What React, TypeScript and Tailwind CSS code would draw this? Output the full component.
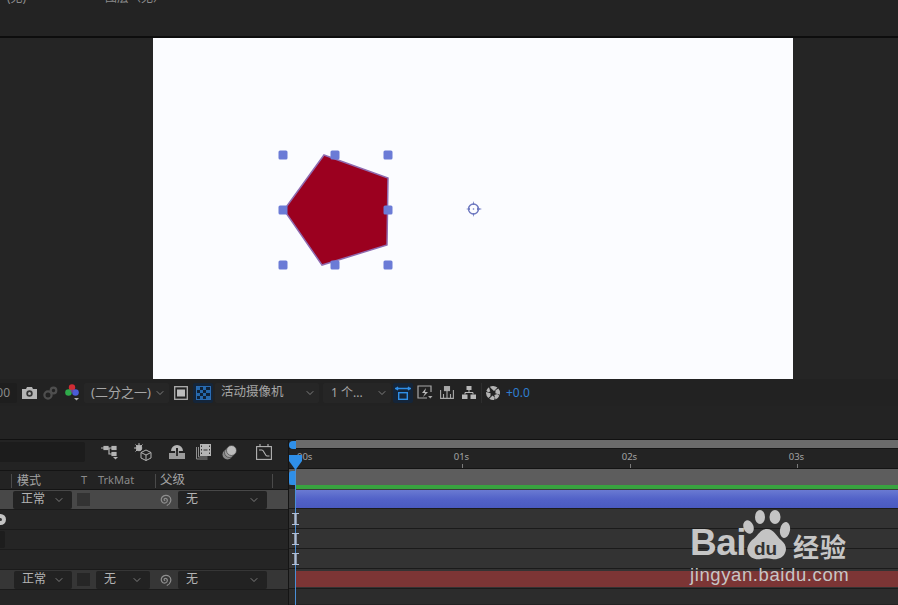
import { ChevronDown } from "lucide-react";

const font = "font-['Noto_Sans','Noto_Sans_CJK_SC',sans-serif]";

const handles = [
  [130, 117],
  [182, 117],
  [235, 117],
  [130, 172],
  [235, 172],
  [130, 227],
  [182, 227],
  [235, 227],
];

const Select = ({ label, className }: { label: string; className: string }) => (
  <div className={`flex h-[18px] items-center justify-between rounded-[2px] bg-[#222222] pb-[2px] pl-[8px] pr-[7px] text-[12px] text-[#b4b4b4] ${className}`}>
    <span>{label}</span>
    <ChevronDown size={12} strokeWidth={1.5} className="mt-[2px] text-[#9a9a9a]" />
  </div>
);

const Spiral = () => (
  <svg width="14" height="14" viewBox="0 0 14 14" fill="none" stroke="#8f8f8f" strokeWidth="1.2" strokeLinecap="round">
    <path d="M6.800 7.400c-.9-.2-1-1.500 0-1.900 1.300-.5 2.700.6 2.500 2.200-.2 1.900-2.500 2.900-4.300 2C3 8.700 2.700 5.800 4.200 4c1.700-2 5-2.300 7-.6 1.500 1.300 1.900 3.400 1.300 5.200-.5 1.600-1.700 3-3.300 3.700" />
  </svg>
);

const Swatch = ({ className }: { className: string }) => <div className={`h-[13px] w-[13px] ${className}`} />;

const ToolIcon = ({ children, active }: { children: React.ReactNode; active?: boolean }) => (
  <div className={`flex h-[20px] w-[20px] shrink-0 items-center justify-center rounded-[2px] ${active ? "bg-[#14253a]" : ""}`}>{children}</div>
);

const Toolbar = () => (
  <div className={`flex h-[27px] items-center bg-[#222222] text-[12px] text-[#a6a6a6] ${font}`}>
    <div className="flex h-[20px] w-[17px] items-center justify-end rounded-r-[2px] bg-[#1e1e1e] pr-[7px] text-[#8a8a8a]">
      <span className="whitespace-nowrap">00</span>
    </div>
    <div className="ml-[2px]"><ToolIcon>
      <svg width="15" height="12" viewBox="0 0 15 12"><path d="M0 2h4l1-2h5l1 2h4v10H0z" fill="#b4b4b4" /><circle cx="7.500" cy="6.500" r="3.200" fill="#333333" /><circle cx="7.500" cy="6.500" r="1.500" fill="#b4b4b4" /></svg>
    </ToolIcon></div>
    <div className="ml-[1px]"><ToolIcon>
      <svg width="15" height="14" viewBox="0 0 15 14" fill="none" stroke="#4e4e4e" strokeWidth="2.200"><circle cx="5" cy="9" r="3.600" /><circle cx="10.500" cy="4.500" r="2.800" /></svg>
    </ToolIcon></div>
    <div className="ml-[2px]"><ToolIcon>
      <svg width="15" height="17" viewBox="0 0 15 17"><circle cx="7" cy="3.500" r="3.200" fill="#d02c34" /><circle cx="3.500" cy="8.500" r="3.300" fill="#2faa4a" /><circle cx="10.500" cy="8.500" r="3.300" fill="#4a5cd8" /><circle cx="7" cy="7" r="1.500" fill="#6a4a90" /><path d="M9 14h5l-2.500 2.500z" fill="#b0b0b0" /></svg>
    </ToolIcon></div>
    <div className="ml-[2px] flex h-[20px] w-[85px] items-center justify-between rounded-[2px] bg-[#262626] pl-[7px] pr-[3px] text-[13px]">
      <span className="whitespace-nowrap">(二分之一)</span>
      <ChevronDown size={12} strokeWidth={1.5} className="text-[#9a9a9a]" />
    </div>
    <div className="ml-[2px]"><ToolIcon>
      <svg width="14" height="14" viewBox="0 0 14 14"><rect x=".7" y=".7" width="12.600" height="12.600" fill="none" stroke="#b0b0b0" strokeWidth="1.300" /><rect x="3" y="3.500" width="8" height="7" fill="#bdbdbd" /></svg>
    </ToolIcon></div>
    <div className="ml-[2px]"><ToolIcon active>
      <svg width="15" height="14" viewBox="0 0 15 14">
        <rect x=".5" y=".5" width="14" height="13" fill="#0f2238" stroke="#2a6cb4" />
        <path d="M1 1h3v3H1zM7 1h3v3H7zM4 4h3v3H4zM10 4h4v3h-4zM1 7h3v3H1zM7 7h3v3H7zM4 10h3v3H4zM10 10h4v3h-4z" fill="#2568ac" />
      </svg>
    </ToolIcon></div>
    <div className="ml-[2px] flex h-[20px] w-[104px] items-center justify-between rounded-[2px] bg-[#262626] pl-[6px] pr-[3px] text-[12.500px]">
      <span className="whitespace-nowrap">活动摄像机</span>
      <ChevronDown size={12} strokeWidth={1.5} className="text-[#9a9a9a]" />
    </div>
    <div className="ml-[4px] flex h-[20px] w-[68px] items-center justify-between rounded-[2px] bg-[#262626] pl-[8px] pr-[3px] text-[12px]">
      <span className="whitespace-nowrap">1 个...</span>
      <ChevronDown size={12} strokeWidth={1.5} className="text-[#9a9a9a]" />
    </div>
    <div className="ml-[2px]"><ToolIcon active>
      <svg width="16" height="14" viewBox="0 0 16 14" fill="none" stroke="#2f8fe8" strokeWidth="1.400"><path d="M0 2.500h16M3 1 1 2.500 3 4M13 1l2 1.500L13 4" /><rect x="3.700" y="6.700" width="8.600" height="6.600" /></svg>
    </ToolIcon></div>
    <div className="ml-[2px]"><ToolIcon>
      <svg width="16" height="15" viewBox="0 0 16 15" fill="none"><path d="M14 7V1H1v12h9" stroke="#a8a8a8" strokeWidth="1.200" /><path d="M9 3 5 8h3l-2 4 5-5H8z" fill="#b8b8b8" /><path d="M11 11h4.500l-2.200 2.500z" fill="#a8a8a8" /></svg>
    </ToolIcon></div>
    <div className="ml-[2px]"><ToolIcon>
      <svg width="14" height="13" viewBox="0 0 14 13" fill="none" stroke="#a8a8a8" strokeWidth="1.100"><path d="M.6 4v8.400h12.800V4M3.500 12V8M7 12V4M10.500 12V8" /><rect x="4.500" y=".6" width="5" height="4" fill="#a8a8a8" /></svg>
    </ToolIcon></div>
    <div className="ml-[2px]"><ToolIcon>
      <svg width="14" height="13" viewBox="0 0 14 13"><rect x="4.500" width="5" height="4" fill="#b8b8b8" /><rect y="8.500" width="5.500" height="4.500" fill="#b8b8b8" /><rect x="8.500" y="8.500" width="5.500" height="4.500" fill="#b8b8b8" /><path d="M7 4v2.500M3 8.500v-2h8v2" stroke="#b8b8b8" fill="none" /></svg>
    </ToolIcon></div>
    <div className="ml-[2px] h-[20px] w-px bg-[#2e2e2e]" />
    <div className="ml-[1px]"><ToolIcon>
      <svg width="14" height="14" viewBox="0 0 14 14" fill="#b4b4b4">
        <path d="M7 0a7 7 0 0 1 4.500 1.600L8 5 5 2.200 3.900.7A7 7 0 0 1 7 0z" />
        <path d="M12.400 2.500A7 7 0 0 1 14 7l-.2 1.700-4.400-1.400.1-3z" />
        <path d="M13.400 9.800a7 7 0 0 1-3.900 3.700L8.300 9l3-1.100z" />
        <path d="M8.200 13.900a7 7 0 0 1-5-1.200l3.400-3.300 2.200 2z" />
        <path d="M2.300 11.900A7 7 0 0 1 0 7l.1-1.100 4.500 1.300-.2 3z" />
        <path d="M.4 4.700A7 7 0 0 1 3 1.200L4.300 5.600 2 6.300z" />
      </svg>
    </ToolIcon></div>
    <span className="ml-[3px] text-[12px] text-[#2f7fd1]">+0.0</span>
  </div>
);

const TimelineIcons = () => (
  <div className="flex h-[30px] items-center">
    <div className="mb-[6px] h-[20px] w-[85px] rounded-r-[2px] bg-[#1c1c1c]" />
    <div className="mb-[6px] flex items-center">
      <svg width="18" height="15" viewBox="0 0 18 15" fill="none" stroke="#b4b4b4" strokeWidth="1.200" className="ml-[16px]"><path d="M0 3h11M8 3v6h3" /><rect x="3" y="1.500" width="4" height="3" fill="#b4b4b4" /><rect x="11" y="1.500" width="4" height="3" fill="#b4b4b4" /><rect x="11" y="7.500" width="4" height="3" fill="#b4b4b4" /><path d="M12 12h5l-2.500 2.500z" fill="#b4b4b4" stroke="none" /></svg>
      <svg width="18" height="18" viewBox="0 0 18 18" fill="none" stroke="#b4b4b4" strokeWidth="1" className="ml-[15px]"><circle cx="5" cy="5" r="2.800" fill="#b4b4b4" /><path d="M5 0v2M0 5h2M1.500 1.500 3 3M8.500 1.500 7 3M1.500 8.500 3 7" /><path d="M12 7l5 2.500v5.500l-5 2.500-5-2.500V9.500zM7 9.500l5 2.500 5-2.500M12 12v5.500" /></svg>
      <svg width="16" height="14" viewBox="0 0 16 14" className="ml-[17px]"><path d="M2 6a6 6 0 0 1 12 0h-5V3H7v3z" fill="#b4b4b4" /><path d="M0 8h6V6h4v2h6v6H0z" fill="#9c9c9c" /><path d="M7 6h2v5H7z" fill="#333333" /></svg>
      <svg width="15" height="16" viewBox="0 0 15 16" className="ml-[11px]"><rect x="4" y="0" width="11" height="12" fill="#b4b4b4" /><path d="M.5 3v12h11" fill="none" stroke="#8f8f8f" /><path d="M2.500 3v10h9" fill="none" stroke="#8f8f8f" /><path d="M5 1.500h1v1.500H5zM5 5h1v1.500H5zM5 8.500h1V10H5zM13 1.500h1v1.500h-1zM13 5h1v1.500h-1zM13 8.500h1V10h-1zM7.500 5.500h4v1h-4z" fill="#333333" /></svg>
      <svg width="15" height="15" viewBox="0 0 15 15" className="ml-[11px]"><circle cx="5.500" cy="9.500" r="5" fill="#8a8a8a" /><circle cx="7.500" cy="7.500" r="5" fill="#a0a0a0" stroke="#333333" strokeWidth=".6" /><circle cx="9.500" cy="5.500" r="5" fill="#bcbcbc" stroke="#333333" strokeWidth=".6" /></svg>
      <svg width="16" height="16" viewBox="0 0 16 16" fill="none" stroke="#b4b4b4" strokeWidth="1.100" className="ml-[19px]"><rect x=".6" y="2.600" width="14.800" height="12.800" /><path d="M4 0v3M12 0v3" /><path d="M3 6h3c2 0 3 6 5 6h2.500" /></svg>
    </div>
  </div>
);

const LeftRow = ({ className, children }: { className: string; children?: React.ReactNode }) => (
  <div className={`flex h-[20px] items-center border-b border-[#1b1b1b] ${className}`}>{children}</div>
);

const IBeam = () => (
  <svg width="7" height="12" viewBox="0 0 7 12" fill="none" stroke="#aebfd8" className="relative z-10 ml-[3px]">
    <path d="M0 .5h7M0 11.500h7" strokeWidth="1" />
    <path d="M3.500 1v10" strokeWidth="2.400" />
  </svg>
);

const Ruler = ({ label, className }: { label: string; className: string }) => (
  <div className={`flex w-[20px] flex-col items-center ${className}`}>
    <span className="mt-[1px] text-[9.500px] leading-[14px] text-[#a4a4a4]">{label}</span>
    <div className="ml-[3px] h-[5px] w-px bg-[#7a7a7a]" />
  </div>
);

const Watermark = () => (
  <div className="absolute left-[690px] top-[509px] z-20 h-[78px] w-[160px] font-['Liberation_Sans','Noto_Sans_CJK_SC',sans-serif] text-[#c6c6c6]">
    <span className="absolute left-0 top-[14px] text-[37px] font-bold leading-[40px] tracking-[-0.5px]">Bai</span>
    <svg width="48" height="51" viewBox="0 0 48 51" className="absolute left-[53px] top-0">
      <g fill="#c4c4c4">
        <ellipse cx="5.500" cy="18" rx="5" ry="7" transform="rotate(-20 5.500 18)" />
        <ellipse cx="17" cy="8" rx="5" ry="7" />
        <ellipse cx="32" cy="8" rx="5.500" ry="7" />
        <ellipse cx="42" cy="21" rx="5" ry="8" transform="rotate(10 42 21)" />
        <path d="M24 20c7 0 9 7 14 11 5 4 6 9 4 13-2 5-8 7-13 6-4-1-7-1-11 0-6 1-11-1-13-6-2-4 0-9 4-13 6-4 8-11 15-11z" />
      </g>
    </svg>
    <span className="absolute left-[64px] top-[29px] text-[19px] font-bold leading-[22px] text-[#333333]">du</span>
    <span className="absolute left-[103px] top-[22px] whitespace-nowrap font-['Noto_Sans_CJK_SC',sans-serif] text-[26px] font-bold leading-[30px] tracking-[1px]">经验</span>
    <span className="absolute left-0 top-[54px] whitespace-nowrap text-[18.500px] leading-[24px] tracking-[0.6px]">jingyan.baidu.com</span>
  </div>
);

export default function App() {
  return (
    <div className={`relative flex h-[605px] w-[898px] flex-col overflow-hidden bg-[#232323] ${font}`}>
      <div className="flex h-[36px] overflow-hidden pl-[7px] text-[12px] leading-[14px] text-[#8c8c8c]">
        <span className="-mt-[9px] w-[98px] whitespace-nowrap">(无)</span>
        <span className="-mt-[9px] whitespace-nowrap">图层（无）</span>
      </div>
      <div className="h-[2px] bg-[#0d0d0d]" />

      <div className="h-[341px] bg-[#252525] pl-[153px]">
        <div className="w-[640px] bg-[#fbfcff]">
          <svg width="640" height="341" viewBox="0 0 640 341">
            <polygon points="171,117 235,140 234,207 169,227 131,172" fill="#9b001f" stroke="#8f6bb0" strokeWidth="1.500" />
            {handles.map(([x, y]) => (
              <rect key={`${x}-${y}`} x={x - 4.500} y={y - 4.500} width="9" height="9" rx="1.500" fill="#6b7bd6" />
            ))}
            <circle cx="320.500" cy="171" r="5" fill="none" stroke="#6d78c0" strokeWidth="1.400" />
            <path d="M313 171l4-1v2zM329 171l-5-1.500v3zM320.500 163l1 4h-2zM320.500 179l1-4h-2z" fill="#6d78c0" />
            <circle cx="320.500" cy="171" r=".8" fill="#6d78c0" />
          </svg>
        </div>
      </div>

      <Toolbar />
      <div className="h-[34px] border-b border-[#111111] bg-[#232323]" />

      <div className="flex flex-1">
        <div className="w-[288px] shrink-0 overflow-hidden">
          <TimelineIcons />
          <div className="flex h-[20px] items-center border-t border-b border-[#141414] pt-[1px] text-[12px] text-[#a4a4a4]">
            <div className="ml-[11px] h-[14px] w-px bg-[#4a4a4a]" />
            <span className="ml-[5px] w-[64px]">模式</span>
            <span className="w-[17px] text-[11px] text-[#8a8a8a]">T</span>
            <span className="w-[57px] text-[11px] text-[#8a8a8a]">TrkMat</span>
            <div className="h-[14px] w-px bg-[#4a4a4a]" />
            <span className="ml-[4px] w-[112px] text-[12.500px]">父级</span>
            <div className="h-[14px] w-px bg-[#4a4a4a]" />
          </div>
          <LeftRow className="bg-[#484848]">
            <Select label="正常" className="ml-[13px] w-[59px]" />
            <Swatch className="ml-[5px] bg-[#333333]" />
            <div className="ml-[68px] flex"><Spiral /></div>
            <Select label="无" className="ml-[6px] w-[89px]" />
          </LeftRow>
          <LeftRow className="bg-[#252525]">
            <div className="-ml-[5px] flex h-[11px] w-[11px] items-center justify-center rounded-full bg-[#c4c4c4]">
              <div className="h-[3px] w-[3px] rounded-full bg-[#333333]" />
            </div>
          </LeftRow>
          <LeftRow className="bg-[#252525]">
            <div className="h-[17px] w-[5px] rounded-r-[2px] bg-[#1d1d1d]" />
          </LeftRow>
          <LeftRow className="bg-[#252525]" />
          <LeftRow className="bg-[#363636]">
            <Select label="正常" className="ml-[14px] w-[58px]" />
            <Swatch className="ml-[5px] bg-[#262626]" />
            <Select label="无" className="ml-[6px] w-[54px]" />
            <div className="ml-[8px] flex"><Spiral /></div>
            <Select label="无" className="ml-[6px] w-[89px]" />
          </LeftRow>
          <div className="h-[15px] bg-[#252525]" />
        </div>

        <div className="min-w-0 flex-1 border-l border-[#141414]">
          <div className="h-[9px] border-b border-[#141414] bg-[#232323] pl-[7px]">
            <div className="h-full bg-[#6b6b6b]" />
          </div>
          <div className="flex h-[20px] border-b border-[#141414] bg-[#232323] text-[#a4a4a4]">
            <span className="ml-[8px] text-[9.500px] leading-[16px]">00s</span>
            <Ruler label="01s" className="ml-[139px]" />
            <Ruler label="02s" className="ml-[148px]" />
            <Ruler label="03s" className="ml-[147px]" />
          </div>
          <div className="h-[16px] bg-[#5d5d5d]" />
          <div className="h-[4px] bg-[#232323] pl-[7px]">
            <div className="h-full bg-[#38a33f]" />
          </div>
          <div className="flex h-[20px] items-center border-b border-[#1b1b1b] bg-[#3a3a3a] pl-[7px]">
            <div className="h-[18px] w-full bg-linear-to-b from-[#6a7ad2] via-[#5262c8] to-[#4a5ac0]" />
          </div>
          <div className="flex h-[20px] items-center border-b border-[#1b1b1b] bg-[#333333]"><IBeam /></div>
          <div className="flex h-[20px] items-center border-b border-[#1b1b1b] bg-[#333333]"><IBeam /></div>
          <div className="flex h-[20px] items-center border-b border-[#1b1b1b] bg-[#333333]"><IBeam /></div>
          <div className="flex h-[20px] items-center border-b border-[#1b1b1b] bg-[#333333] pl-[7px]">
            <div className="h-[16px] w-full bg-[#7c3535]" />
          </div>
          <div className="h-[15px] bg-[#2c2c2c]" />
        </div>
      </div>

      {/* playhead */}
      <div className="absolute left-[295px] top-[456px] h-[149px] w-px bg-[#4a8fd6]" />
      <div className="absolute left-[289px] top-[441px] h-[8px] w-[7px] rounded-l-[4px] bg-[#2f8fe8]" />
      <div className="absolute left-[289px] top-[471px] h-[14px] w-[6px] rounded-l-[3px] bg-[#2f8fe8]" />
      <svg width="13" height="15" viewBox="0 0 13 15" className="absolute left-[289px] top-[455px]">
        <path d="M0 0h13v6l-6.500 9L0 6z" fill="#2f8fe8" />
      </svg>

      <Watermark />
    </div>
  );
}
